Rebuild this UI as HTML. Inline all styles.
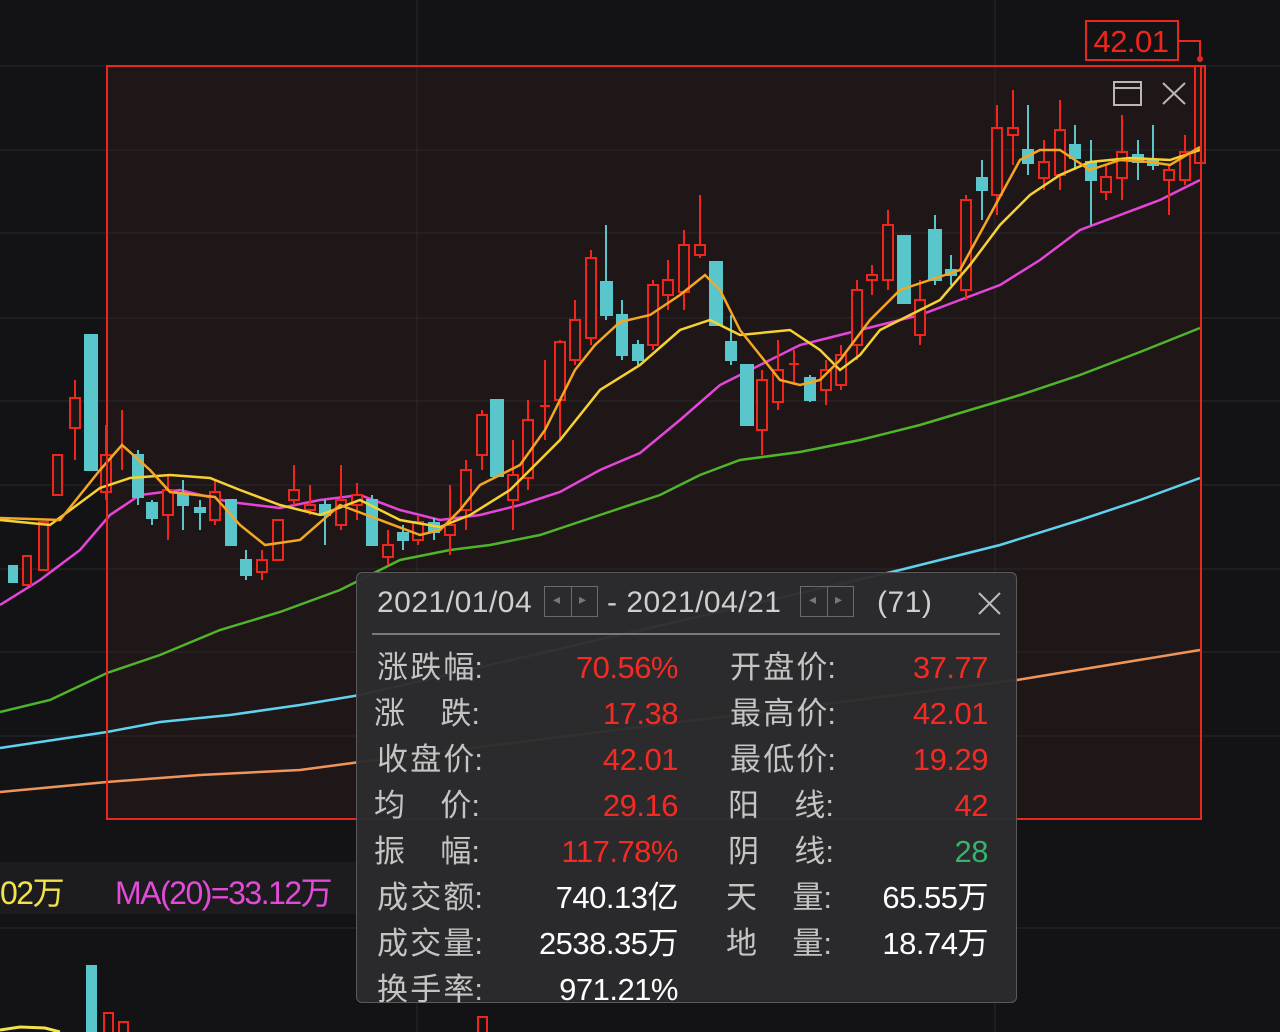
<!DOCTYPE html>
<html><head><meta charset="utf-8"><style>
body{margin:0;width:1280px;height:1032px;background:#131316;overflow:hidden;position:relative;font-family:"Liberation Sans","Noto Sans CJK SC",sans-serif}
svg{position:absolute;left:0;top:0}
.pop{position:absolute;left:356px;top:572px;width:661px;height:431px;background:rgba(44,44,46,0.96);border:1px solid #5a5a5c;border-radius:6px;box-sizing:border-box}
.row{position:absolute;height:40px;font-size:31px;line-height:40px;width:659px}
.lab{position:absolute;width:106px;display:flex;justify-content:space-between;color:#c4c4c4}
.val{position:absolute;text-align:right;width:200px;letter-spacing:-0.5px}
.r{color:#f52a22}.w{color:#fff}.g{color:#36b36d}
.nav{position:absolute;top:13px;width:54px;height:31px;border:1px solid #6a6a6a;box-sizing:border-box}
.nav:after{content:"";position:absolute;left:26px;top:0;width:1px;height:29px;background:#6a6a6a}
.nav span{position:absolute;top:4px;font-size:14px;color:#777}
.hd{position:absolute;top:10px;font-size:30px;color:#cfcfcf;line-height:40px;letter-spacing:0.5px}
</style></head><body>
<svg width="1280" height="1032" viewBox="0 0 1280 1032">
<rect x="107" y="66" width="1094" height="753" fill="#1f1617"/>
<g stroke="#2a2a2d" stroke-width="1">
<line x1="0" y1="150" x2="1280" y2="150"/><line x1="0" y1="233" x2="1280" y2="233"/><line x1="0" y1="318" x2="1280" y2="318"/><line x1="0" y1="401" x2="1280" y2="401"/><line x1="0" y1="485" x2="1280" y2="485"/><line x1="0" y1="569" x2="1280" y2="569"/><line x1="0" y1="652" x2="1280" y2="652"/><line x1="0" y1="736" x2="1280" y2="736"/><line x1="0" y1="66" x2="1280" y2="66"/><line x1="0" y1="928" x2="1280" y2="928"/>
<line x1="417" y1="0" x2="417" y2="1032"/><line x1="995" y1="0" x2="995" y2="1032"/>
</g>
<rect x="0" y="862" width="356" height="52" fill="#1c1c1f"/>
<g fill="none" stroke-width="2.5">
<polyline stroke="#f0955a" points="0,792 107,782 200,775 300,770 360,762 1017,680 1200,650"/>
<polyline stroke="#5fd2f0" points="0,748 40,742 107,732 160,722 230,715 300,705 360,695 900,570 1000,545 1080,520 1140,500 1200,478"/>
<polyline stroke="#4fb52a" points="0,712 50,700 107,673 160,655 220,630 280,612 340,590 400,560 450,550 490,545 540,535 600,515 660,495 700,475 740,460 800,452 860,440 920,425 970,410 1020,395 1080,375 1140,352 1200,328"/>
<polyline stroke="#e545d8" points="0,605 40,580 80,550 110,515 140,495 180,490 230,502 280,508 320,500 360,495 400,510 440,520 480,515 520,505 560,492 600,470 640,453 680,420 720,385 760,365 800,345 840,335 880,325 920,315 960,300 1000,285 1040,260 1080,230 1120,215 1160,200 1200,180"/>
</g>
<g stroke-width="2">
<g stroke="#59c6cc" fill="#59c6cc">
<rect x="9" y="566" width="8" height="16"/><rect x="85" y="335" width="12" height="135"/>
<line x1="138" y1="450" x2="138" y2="505"/><rect x="133" y="455" width="10" height="42"/>
<line x1="152" y1="500" x2="152" y2="525"/><rect x="147" y="503" width="10" height="15"/>
<line x1="183" y1="480" x2="183" y2="530"/><rect x="178" y="495" width="10" height="10"/>
<line x1="200" y1="500" x2="200" y2="530"/><rect x="195" y="508" width="10" height="4"/>
<rect x="226" y="500" width="10" height="45"/>
<line x1="246" y1="550" x2="246" y2="580"/><rect x="241" y="560" width="10" height="15"/>
<line x1="325" y1="500" x2="325" y2="545"/><rect x="320" y="505" width="10" height="10"/>
<line x1="372" y1="495" x2="372" y2="545"/><rect x="367" y="500" width="10" height="45"/>
<line x1="403" y1="525" x2="403" y2="550"/><rect x="398" y="533" width="10" height="7"/>
<line x1="434" y1="518" x2="434" y2="540"/><rect x="429" y="523" width="10" height="9"/>
<rect x="491" y="400" width="12" height="76"/>
<line x1="606" y1="225" x2="606" y2="320"/><rect x="601" y="282" width="11" height="33"/>
<line x1="622" y1="300" x2="622" y2="360"/><rect x="617" y="315" width="10" height="40"/>
<line x1="638" y1="340" x2="638" y2="365"/><rect x="633" y="345" width="10" height="15"/>
<rect x="710" y="262" width="12" height="63"/>
<line x1="731" y1="315" x2="731" y2="365"/><rect x="726" y="342" width="10" height="18"/>
<rect x="741" y="365" width="12" height="60"/>
<line x1="810" y1="375" x2="810" y2="402"/><rect x="805" y="378" width="10" height="22"/>
<rect x="898" y="236" width="12" height="67"/>
<line x1="935" y1="215" x2="935" y2="285"/><rect x="929" y="230" width="12" height="50"/>
<line x1="951" y1="255" x2="951" y2="285"/><rect x="946" y="270" width="10" height="5"/>
<line x1="982" y1="160" x2="982" y2="220"/><rect x="977" y="178" width="10" height="12"/>
<line x1="1028" y1="105" x2="1028" y2="175"/><rect x="1023" y="150" width="10" height="13"/>
<line x1="1075" y1="125" x2="1075" y2="170"/><rect x="1070" y="145" width="10" height="13"/>
<line x1="1091" y1="140" x2="1091" y2="225"/><rect x="1086" y="162" width="10" height="18"/>
<line x1="1138" y1="140" x2="1138" y2="180"/><rect x="1133" y="155" width="10" height="7"/>
<line x1="1153" y1="125" x2="1153" y2="170"/><rect x="1148" y="160" width="10" height="5"/>
</g>
<g stroke="#f0261c" fill="#1f1617">
<rect x="23" y="556" width="8" height="29"/><rect x="39" y="522" width="9" height="48"/><rect x="53" y="455" width="9" height="40"/><line x1="75" y1="380" x2="75" y2="460"/><rect x="70" y="398" width="10" height="30"/>
<line x1="106" y1="425" x2="106" y2="500"/><rect x="101" y="455" width="10" height="37"/>
<line x1="122" y1="410" x2="122" y2="470"/>
<line x1="168" y1="475" x2="168" y2="540"/><rect x="163" y="490" width="10" height="25"/>
<line x1="215" y1="480" x2="215" y2="525"/><rect x="210" y="492" width="10" height="28"/>
<line x1="262" y1="550" x2="262" y2="580"/><rect x="257" y="560" width="10" height="12"/>
<rect x="273" y="520" width="10" height="40"/>
<line x1="294" y1="465" x2="294" y2="505"/><rect x="289" y="490" width="10" height="10"/>
<line x1="310" y1="485" x2="310" y2="515"/><rect x="305" y="505" width="10" height="5"/>
<line x1="341" y1="465" x2="341" y2="530"/><rect x="336" y="500" width="10" height="25"/>
<line x1="357" y1="483" x2="357" y2="520"/><rect x="352" y="495" width="10" height="10"/>
<line x1="388" y1="530" x2="388" y2="565"/><rect x="383" y="545" width="10" height="12"/>
<line x1="418" y1="515" x2="418" y2="545"/><rect x="413" y="522" width="10" height="18"/>
<line x1="450" y1="485" x2="450" y2="555"/><rect x="445" y="525" width="10" height="10"/>
<line x1="466" y1="460" x2="466" y2="530"/><rect x="461" y="470" width="10" height="40"/>
<line x1="482" y1="410" x2="482" y2="470"/><rect x="477" y="415" width="10" height="40"/>
<line x1="513" y1="440" x2="513" y2="530"/><rect x="508" y="475" width="10" height="25"/>
<line x1="528" y1="400" x2="528" y2="490"/><rect x="523" y="420" width="10" height="58"/>
<line x1="545" y1="360" x2="545" y2="440"/><line x1="540" y1="406" x2="550" y2="406"/>
<line x1="560" y1="340" x2="560" y2="440"/><rect x="555" y="342" width="10" height="58"/>
<line x1="575" y1="300" x2="575" y2="365"/><rect x="570" y="320" width="10" height="40"/>
<line x1="591" y1="250" x2="591" y2="345"/><rect x="586" y="258" width="10" height="80"/>
<line x1="653" y1="280" x2="653" y2="350"/><rect x="648" y="285" width="10" height="60"/>
<line x1="668" y1="260" x2="668" y2="310"/><rect x="663" y="280" width="10" height="15"/>
<line x1="684" y1="230" x2="684" y2="310"/><rect x="679" y="245" width="10" height="47"/>
<line x1="700" y1="195" x2="700" y2="258"/><rect x="695" y="245" width="10" height="10"/>
<line x1="762" y1="370" x2="762" y2="455"/><rect x="757" y="380" width="10" height="50"/>
<line x1="778" y1="340" x2="778" y2="410"/><rect x="773" y="370" width="10" height="32"/>
<line x1="794" y1="350" x2="794" y2="385"/><line x1="789" y1="364" x2="799" y2="364"/>
<line x1="826" y1="360" x2="826" y2="405"/><rect x="821" y="370" width="10" height="20"/>
<line x1="841" y1="345" x2="841" y2="390"/><rect x="836" y="355" width="10" height="30"/>
<line x1="857" y1="280" x2="857" y2="360"/><rect x="852" y="290" width="10" height="55"/>
<line x1="872" y1="265" x2="872" y2="295"/><rect x="867" y="275" width="10" height="5"/>
<line x1="888" y1="210" x2="888" y2="290"/><rect x="883" y="225" width="10" height="55"/>
<line x1="920" y1="280" x2="920" y2="345"/><rect x="915" y="300" width="10" height="35"/>
<line x1="966" y1="195" x2="966" y2="300"/><rect x="961" y="200" width="10" height="90"/>
<line x1="997" y1="105" x2="997" y2="215"/><rect x="992" y="128" width="10" height="67"/>
<line x1="1013" y1="90" x2="1013" y2="165"/><rect x="1008" y="128" width="10" height="7"/>
<line x1="1044" y1="140" x2="1044" y2="190"/><rect x="1039" y="162" width="10" height="16"/>
<line x1="1060" y1="100" x2="1060" y2="190"/><rect x="1055" y="130" width="10" height="45"/>
<line x1="1106" y1="165" x2="1106" y2="200"/><rect x="1101" y="177" width="10" height="15"/>
<line x1="1122" y1="115" x2="1122" y2="200"/><rect x="1117" y="152" width="10" height="26"/>
<line x1="1169" y1="165" x2="1169" y2="215"/><rect x="1164" y="170" width="10" height="10"/>
<line x1="1185" y1="135" x2="1185" y2="185"/><rect x="1180" y="152" width="10" height="28"/>
<rect x="1195" y="66" width="10" height="97"/>
</g>
</g>
<g fill="none" stroke-width="2.5">
<polyline stroke="#f5d232" points="0,520 50,525 100,488 130,478 170,475 210,478 240,490 280,505 320,515 360,500 400,520 440,527 470,515 510,490 530,470 560,440 600,390 640,365 680,330 710,320 740,335 790,330 820,350 840,370 860,355 880,330 900,320 940,300 970,265 1000,225 1030,195 1060,175 1090,162 1130,158 1170,160 1200,150"/>
<polyline stroke="#f5a623" points="0,518 60,520 100,470 122,445 150,470 170,492 215,497 240,525 265,545 300,540 340,505 380,520 420,535 440,530 460,510 480,485 520,465 545,430 575,370 595,345 620,322 650,315 680,295 705,275 720,290 740,330 760,355 780,380 800,385 820,380 840,360 870,320 900,290 930,280 960,270 990,215 1020,160 1040,150 1060,150 1090,170 1120,160 1150,162 1170,165 1200,147"/>
</g>
<rect x="107" y="66" width="1094" height="753" fill="none" stroke="#e8281c" stroke-width="2"/>
<rect x="1086" y="21" width="92" height="39" fill="#131316" stroke="#e8281c" stroke-width="2"/>
<text x="1131" y="52" fill="#f0261c" font-size="31" text-anchor="middle" font-family="Liberation Sans" letter-spacing="-0.5">42.01</text>
<polyline points="1178,41 1200,41 1200,58" fill="none" stroke="#e8281c" stroke-width="2"/><circle cx="1200" cy="59" r="3" fill="#e8281c"/>
<g stroke="#b8b8b8" stroke-width="2" fill="none"><rect x="1114" y="82" width="27" height="23"/><line x1="1114" y1="88" x2="1141" y2="88"/><line x1="1163" y1="83" x2="1185" y2="104"/><line x1="1185" y1="83" x2="1163" y2="104"/></g>
<text x="0" y="904" fill="#f2e34a" font-size="32" letter-spacing="-1.5">02万</text>
<text x="115" y="904" fill="#e44ad8" font-size="32" letter-spacing="-1.5">MA(20)=33.12万</text>
<rect x="86" y="965" width="11" height="70" fill="#59c6cc"/>
<rect x="104" y="1013" width="9" height="25" fill="none" stroke="#f0261c" stroke-width="2"/>
<rect x="119" y="1022" width="9" height="20" fill="none" stroke="#f0261c" stroke-width="2"/>
<rect x="478" y="1017" width="9" height="20" fill="none" stroke="#f0261c" stroke-width="2"/>
<polyline points="0,1030 20,1027 45,1028 60,1032" fill="none" stroke="#f2e34a" stroke-width="3"/>
</svg>
<div class="pop">
<div class="hd" style="left:20px">2021/01/04</div>
<div class="nav" style="left:187px"><span style="left:8px">◂</span><span style="left:34px">▸</span></div>
<div class="hd" style="left:250px">- 2021/04/21</div>
<div class="nav" style="left:443px"><span style="left:8px">◂</span><span style="left:34px">▸</span></div>
<div class="hd" style="left:520px">(71)</div>
<svg style="left:620px;top:18px" width="26" height="26"><g stroke="#bbb" stroke-width="2"><line x1="2" y1="2" x2="23" y2="23"/><line x1="23" y1="2" x2="2" y2="23"/></g></svg>
<div style="position:absolute;left:15px;top:60px;width:628px;height:2px;background:#7a7a7a"></div>
<div class="row" style="top:75px">
<div class="lab" style="left:20px"><span>涨</span><span>跌</span><span>幅:</span></div><div class="val r" style="left:121px">70.56%</div>
<div class="lab" style="left:373px"><span>开</span><span>盘</span><span>价:</span></div><div class="val r" style="left:431px">37.77</div></div>
<div class="row" style="top:121px">
<div class="lab" style="left:17px"><span>涨</span><span>跌:</span></div><div class="val r" style="left:121px">17.38</div>
<div class="lab" style="left:373px"><span>最</span><span>高</span><span>价:</span></div><div class="val r" style="left:431px">42.01</div></div>
<div class="row" style="top:167px">
<div class="lab" style="left:20px"><span>收</span><span>盘</span><span>价:</span></div><div class="val r" style="left:121px">42.01</div>
<div class="lab" style="left:373px"><span>最</span><span>低</span><span>价:</span></div><div class="val r" style="left:431px">19.29</div></div>
<div class="row" style="top:213px">
<div class="lab" style="left:17px"><span>均</span><span>价:</span></div><div class="val r" style="left:121px">29.16</div>
<div class="lab" style="left:371px"><span>阳</span><span>线:</span></div><div class="val r" style="left:431px">42</div></div>
<div class="row" style="top:259px">
<div class="lab" style="left:17px"><span>振</span><span>幅:</span></div><div class="val r" style="left:121px">117.78%</div>
<div class="lab" style="left:371px"><span>阴</span><span>线:</span></div><div class="val g" style="left:431px">28</div></div>
<div class="row" style="top:305px">
<div class="lab" style="left:20px"><span>成</span><span>交</span><span>额:</span></div><div class="val w" style="left:121px">740.13亿</div>
<div class="lab" style="left:369px"><span>天</span><span>量:</span></div><div class="val w" style="left:431px">65.55万</div></div>
<div class="row" style="top:351px">
<div class="lab" style="left:20px"><span>成</span><span>交</span><span>量:</span></div><div class="val w" style="left:121px">2538.35万</div>
<div class="lab" style="left:369px"><span>地</span><span>量:</span></div><div class="val w" style="left:431px">18.74万</div></div>
<div class="row" style="top:397px">
<div class="lab" style="left:20px"><span>换</span><span>手</span><span>率:</span></div><div class="val w" style="left:121px">971.21%</div></div>
</div>
</body></html>
